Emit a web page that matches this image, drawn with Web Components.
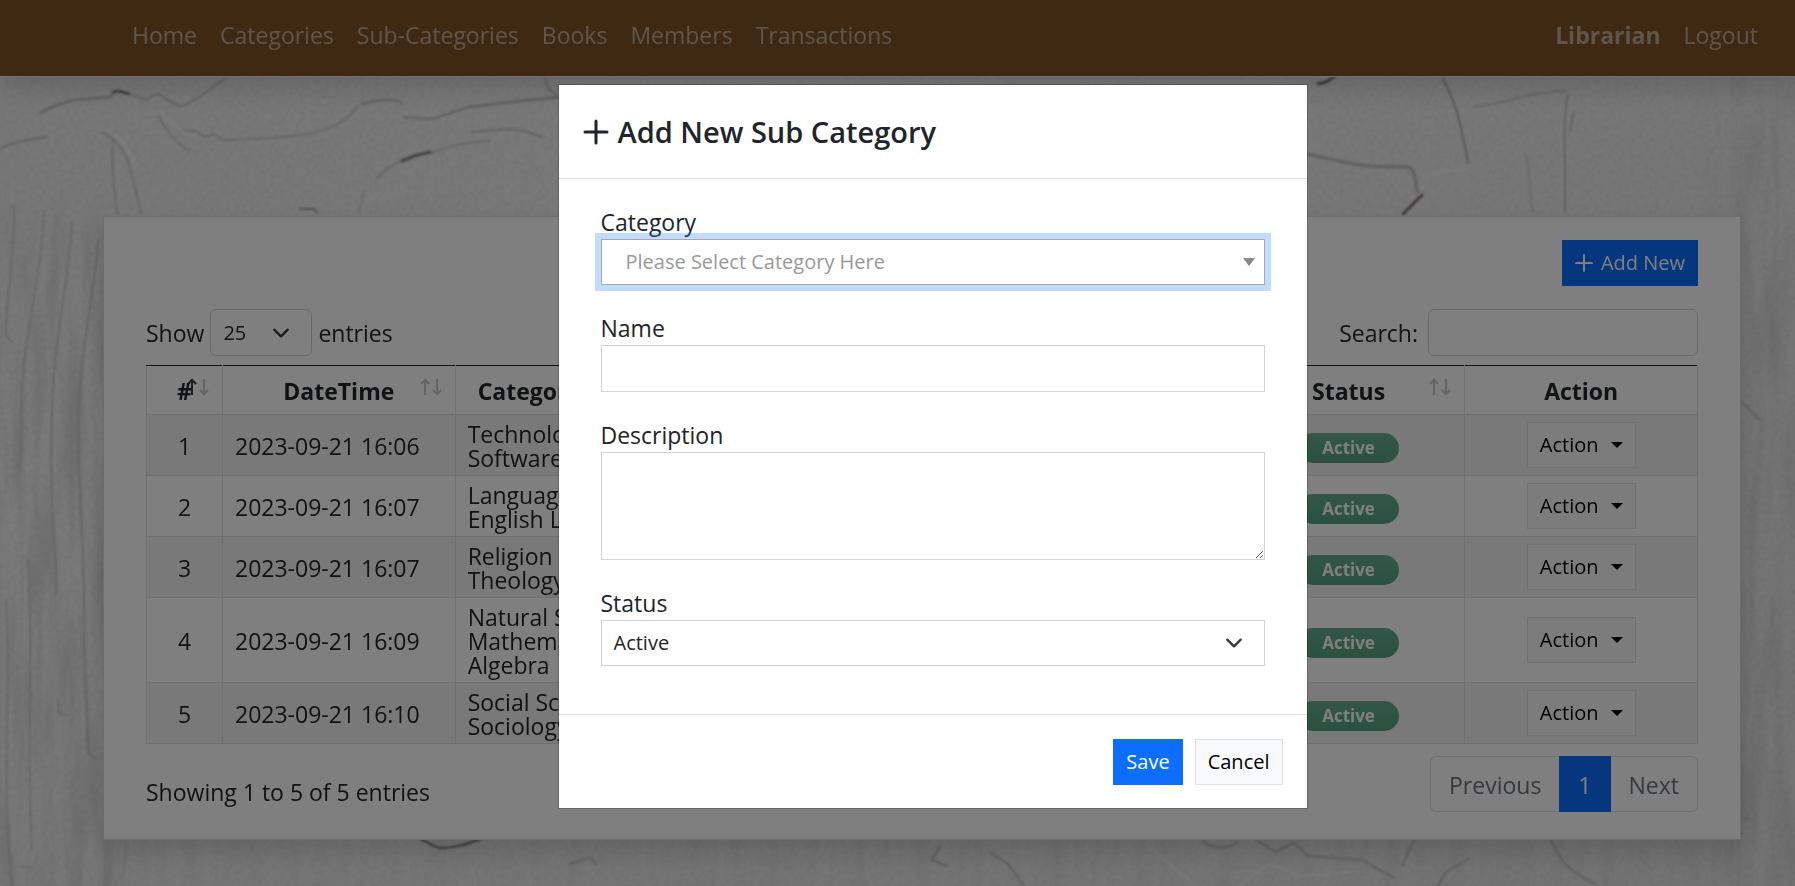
<!DOCTYPE html>
<html lang="en">
<head>
<meta charset="utf-8">
<title>Library - Sub-Categories</title>
<style>
  :root {
    --primary: #0d6efd;
    --ink: #212529;
    --line: #dee2e6;
    --size-base: 23px;
    --size-control: 20px;
  }
  html, body { margin: 0; height: 100%; }
  body {
    font-family: "Segoe UI", "Open Sans", "Noto Sans", sans-serif;
    font-size: var(--size-base);
    line-height: 36px;
    color: var(--ink);
  }
</style>
</head>
<body>
<library-page></library-page>

<template id="tpl-plaster">
  <style>
    :host { display: block; position: fixed; inset: 0; z-index: -1; background: #f0f0f0; }
    svg { display: block; width: 100%; height: 100%; }
  </style>
  <svg viewBox="0 0 1795 886" preserveAspectRatio="none" fill="none" stroke-linecap="round" stroke-linejoin="round" aria-hidden="true">
    <defs>
      <linearGradient id="tone" x1="0" y1="0" x2="1" y2="1">
        <stop offset="0" stop-color="#eceeed"/><stop offset=".3" stop-color="#f4f4f4"/>
        <stop offset=".7" stop-color="#ecebeb"/><stop offset="1" stop-color="#e8e7e7"/>
      </linearGradient>
      <linearGradient id="fade-down" x1="0" y1="0" x2="0" y2="1">
        <stop offset="0" stop-color="#000"/><stop offset=".12" stop-color="#fff"/>
      </linearGradient>
      <linearGradient id="fade-in" x1="0" y1="0" x2="1" y2="0">
        <stop offset="0" stop-color="#000"/><stop offset=".5" stop-color="#fff"/>
      </linearGradient>
      <mask id="left-mask"><rect y="190" width="130" height="696" fill="url(#fade-down)"/></mask>
      <mask id="right-mask"><rect x="1690" y="76" width="105" height="810" fill="url(#fade-in)"/></mask>
      <filter id="streaks" x="0" y="0" width="100%" height="100%">
        <feTurbulence type="fractalNoise" baseFrequency="0.06 0.008" numOctaves="3" seed="4"/>
        <feColorMatrix values="0 0 0 0 .35  0 0 0 0 .35  0 0 0 0 .35  .6 0 0 0 -.22"/>
      </filter>
      <filter id="grain" x="0" y="0" width="100%" height="100%">
        <feTurbulence type="fractalNoise" baseFrequency="0.2" numOctaves="2" seed="9"/>
        <feColorMatrix values="0 0 0 0 .3  0 0 0 0 .3  0 0 0 0 .3  .2 0 0 0 -.07"/>
      </filter>
      <filter id="soft" x="-5%" y="-5%" width="110%" height="110%"><feGaussianBlur stdDeviation="1"/></filter>
    </defs>
    <rect width="1795" height="886" fill="url(#tone)"/>
    <rect width="1795" height="886" filter="url(#grain)"/>
    <g mask="url(#left-mask)"><rect y="190" width="130" height="696" filter="url(#streaks)"/></g>
    <g mask="url(#right-mask)"><rect x="1690" y="76" width="105" height="810" filter="url(#streaks)" opacity=".8"/></g>
    <rect x="104" y="838" width="1636" height="48" filter="url(#streaks)" opacity=".4"/>
    <g filter="url(#soft)" stroke="#c0bebe" stroke-width="2" opacity=".75">
      <path d="M40 113C55 105 72 98 88 99L110 97L115 91" stroke="#a3a1a1"/>
      <path d="M128 93L146 100L158 93L166 99L180 106C196 103 210 88 226 78"/>
      <path d="M113 92L119 91L129 94" stroke="#333"/>
      <path d="M0 149C14 141 28 140 47 137" stroke="#adabab"/>
      <path d="M102 132C118 140 126 152 130 168S138 200 141 214M113 140C112 160 113 184 117 214"/>
      <path d="M158 116C168 132 176 144 190 151M180 131L196 131L205 137L214 134L222 140C250 139 285 139 312 133C340 127 350 116 358 106"/>
      <path d="M160 110C172 126 184 134 196 138M106 130C120 136 130 150 136 166" stroke="#fff"/>
      <path d="M362 104C375 100 390 97 402 103M404 117L430 119C445 117 455 110 470 107" stroke="#aaa8a8"/>
      <path d="M470 107L520 101L558 97" stroke="#a39898"/>
      <path d="M472 132L510 129L525 131L542 137M545 78L548 88L560 99" stroke="#b3b1b1"/>
      <path d="M377 178C388 167 395 163 405 159M430 153C448 148 460 142 490 141"/>
      <path d="M402 161L414 156L430 152" stroke="#6c5e5d" stroke-width="3"/>
      <path d="M365 190C362 200 360 208 359 214" stroke="#d0cece"/>
      <path d="M300 209L314 209L317 213" stroke="#8c8a8a"/>
      <path d="M1443 78C1452 96 1458 112 1461 128S1466 150 1468 163" stroke="#9d9a9a"/>
      <path d="M1306 154C1325 157 1345 164 1370 166L1408 167C1415 169 1415 178 1417 192" stroke="#b0aaaa" stroke-width="3"/>
      <path d="M1422 195L1414 203L1403 214M1318 84L1326 82L1334 77" stroke="#5c4a46" stroke-width="3"/>
      <path d="M1474 107C1500 104 1525 94 1552 92L1567 91"/>
      <path d="M1568 95C1562 120 1566 150 1565 212M1574 112L1570 131" stroke="#b5b2b2"/>
      <path d="M1526 156C1531 175 1529 195 1533 212" stroke="#c8c6c6"/>
      <path d="M1422 175C1438 171 1455 171 1468 169" stroke="#fff"/>
      <path d="M14 205C16 250 6 290 6 335L12 342M44 210C42 265 30 310 24 365S24 440 20 470" stroke="#c4c4c4"/>
      <path d="M72 222C70 270 58 320 54 372S50 500 56 570V594M98 240C94 300 78 360 78 430S86 560 84 640L88 754L96 758" stroke="#c0bebe"/>
      <path d="M28 560C34 640 26 760 32 850M6 600C12 700 0 780 12 886M58 700V712L68 716M22 867L32 868" stroke="#c6c3c3"/>
      <path d="M417 837C428 842 434 848 442 848S468 845 482 838" stroke="#503a3a"/>
      <path d="M570 864L590 858L596 864M940 846L932 860L946 866M990 852L1008 864L1024 886" stroke="#b0aaaa"/>
      <path d="M1202 838C1208 850 1226 850 1238 842M1256 840L1276 852L1294 843L1308 856L1362 860L1394 878M1415 838L1402 866M1438 886L1446 872L1470 858" stroke="#b3aaaa"/>
      <path d="M1146 844L1196 886M1238 886L1270 864L1300 876L1350 872" stroke="#f6f6f6"/>
      <path d="M1550 838C1558 856 1564 870 1596 884M1742 402L1760 420M1744 818L1750 818" stroke="#b5acac"/>
    </g>
  </svg>
</template>

<template id="tpl-navbar">
  <style>
    :host { display: block; background: #7c5426; border-bottom: 1px solid #e6e6e6; box-shadow: 0 12px 24px rgba(0,0,0,.15); }
    nav { display: flex; align-items: center; justify-content: space-between; min-height: 76px; padding: 0 37px 0 132px; box-sizing: border-box; }
    .group { display: flex; gap: 23px; padding-bottom: 6px; }
    ::slotted(a) { color: rgba(255,255,255,.5); text-decoration: none; }
    ::slotted(a[data-user]) { font-weight: 700; }
  </style>
  <nav aria-label="Main">
    <div class="group"><slot></slot></div>
    <div class="group"><slot name="account"></slot></div>
  </nav>
</template>

<template id="tpl-button">
  <style>
    :host { display: inline-block; }
    button {
      display: flex; align-items: center; gap: 8px; min-height: 46px; box-sizing: border-box; padding: 0 12px;
      font: inherit; font-size: var(--size-control); line-height: 32px;
      border: 1px solid var(--line); background: #f8f9fa; color: #000; border-radius: 0; white-space: nowrap;
    }
    :host([variant=primary]) button { background: var(--primary); border-color: var(--primary); color: #fff; }
    :host([caret]) button::after {
      content: ""; margin-left: 4px; border: 6px solid transparent; border-top-color: currentColor; border-bottom: 0;
    }
    ::slotted(svg) { width: 18px; height: 18px; flex: none; }
  </style>
  <button type="button"><slot></slot></button>
</template>

<template id="tpl-badge">
  <style>
    :host {
      display: inline-block; padding: 0 24px; border-radius: 15px; line-height: 30px;
      font-size: 17px; font-weight: 700; color: #fff; background: linear-gradient(#68ae8e, #54a27e); vertical-align: middle;
      margin-top: 6px;
    }
  </style>
  <slot></slot>
</template>

<template id="tpl-table">
  <style>
    :host { display: block; }
    table { width: 100%; border-collapse: collapse; table-layout: fixed; color: var(--ink); }
    th, td { border: 1px solid var(--line); }
    thead th { border-top-color: #212529; }
    th { position: relative; padding: 7px 12px 5px; line-height: 36px; font-weight: 700; }
    td { padding: 7px 12px 5px; line-height: 24px; }
    tbody tr:nth-child(odd) { background: rgba(0,0,0,.05); }
    .mid { text-align: center; }
    .from-left { text-align: left; padding-left: 22px; }
    th svg { position: absolute; right: 13px; top: 12px; width: 22px; height: 18px; fill: none; stroke: #212529; stroke-width: 2; }
    th svg path { opacity: .25; }
    th svg path.on { opacity: .9; }
    .c1 { width: 76px; } .c2, .c4, .c5, .c6 { width: 15%; }
    td.tight { padding-top: 0; padding-bottom: 0; }
  </style>
  <table>
    <colgroup><col class="c1"><col class="c2"><col class="c3"><col class="c4"><col class="c4"><col class="c5"><col class="c6"></colgroup>
    <thead><tr></tr></thead>
    <tbody></tbody>
  </table>
</template>

<template id="tpl-pager">
  <style>
    :host { display: block; }
    ul { display: flex; list-style: none; margin: 0; padding: 0; }
    a { display: block; padding: 10px 18px 8px; line-height: 36px; border: 1px solid var(--line); color: #6c757d; text-decoration: none; background: #fff; }
    li:first-child a { border-radius: 6px 0 0 6px; border-right: 0; }
    li:last-child a { border-radius: 0 6px 6px 0; border-left: 0; }
    a[aria-current] { background: var(--primary); border-color: var(--primary); color: #fff; }
  </style>
  <nav aria-label="Table pages"><ul>
    <li><a href="#prev">Previous</a></li>
    <li><a href="#1" aria-current="page">1</a></li>
    <li><a href="#next">Next</a></li>
  </ul></nav>
</template>

<template id="tpl-card">
  <style>
    :host { display: block; background: #fff; border: 1px solid #d8d8d8; padding: 23px 42px 27px; box-shadow: 0 12px 24px rgba(0,0,0,.15); }
    .head { display: flex; justify-content: flex-end; margin-bottom: 23px; }
    .tools, .foot { display: flex; align-items: center; justify-content: space-between; }
    .tools { margin-bottom: 9px; }
    .foot { margin-top: 12px; }
    .foot p { margin: 0; padding-top: 16px; }
    label { display: flex; align-items: center; }
    select, input {
      box-sizing: border-box; font: inherit; font-size: var(--size-control); color: var(--ink);
      border: 1px solid #ced4da; border-radius: 6px; background-color: #fff; height: 47px;
    }
    select {
      appearance: none; width: 102px; margin: 0 6px; padding: 0 12px;
      background-image: url("data:image/svg+xml,%3Csvg xmlns='http://www.w3.org/2000/svg' viewBox='0 0 16 16'%3E%3Cpath fill='none' stroke='%23343a40' stroke-linecap='round' stroke-linejoin='round' stroke-width='2' d='m2 5 6 6 6-6'/%3E%3C/svg%3E");
      background-repeat: no-repeat; background-position: right 20px center; background-size: 20px 18px;
    }
    input { width: 270px; margin-left: 10px; padding: 0 12px; }
  </style>
  <div class="head">
    <ui-button variant="primary">
      <svg viewBox="0 0 18 18" aria-hidden="true"><path d="M9 1v16M1 9h16" stroke="currentColor" stroke-width="2" stroke-linecap="round"/></svg>
      Add New
    </ui-button>
  </div>
  <div class="tools">
    <label for="length">Show
      <select id="length"><option>25</option></select>
      entries</label>
    <label for="search">Search: <input id="search" type="search"></label>
  </div>
  <slot></slot>
  <div class="foot">
    <p>Showing 1 to 5 of 5 entries</p>
    <page-links></page-links>
  </div>
</template>

<template id="tpl-field">
  <style>
    :host { display: flex; flex-direction: column; align-items: stretch; margin-bottom: 24px; }
    ::slotted(label) { line-height: 34px; padding-top: 2px; }
    ::slotted(input), ::slotted(select), ::slotted(textarea) {
      display: block; box-sizing: border-box; width: 100%; height: 47px; margin: 0; padding: 0 12px;
      font: inherit; font-size: var(--size-control); color: var(--ink);
      border: 1px solid #ced4da; border-radius: 0; background-color: #fff; outline: 0;
    }
    ::slotted(textarea) { height: 108px; }
    ::slotted(select) {
      height: 46px; appearance: none;
      background-image: url("data:image/svg+xml,%3Csvg xmlns='http://www.w3.org/2000/svg' viewBox='0 0 16 16'%3E%3Cpath fill='none' stroke='%23343a40' stroke-linecap='round' stroke-linejoin='round' stroke-width='2' d='m2 5 6 6 6-6'/%3E%3C/svg%3E");
      background-repeat: no-repeat; background-position: right 20px center; background-size: 20px 18px;
    }
    :host([picker]) ::slotted(select) {
      padding-left: 24px; color: #999; border-color: #aaa; box-shadow: 0 0 0 6px rgba(13,110,253,.25);
      background-image: url("data:image/svg+xml,%3Csvg xmlns='http://www.w3.org/2000/svg' viewBox='0 0 12 8'%3E%3Cpath fill='%23888' d='M0 0h12L6 8z'/%3E%3C/svg%3E");
      background-position: right 9px center; background-size: 12px 8px;
    }
  </style>
  <slot name="label"></slot>
  <slot></slot>
</template>

<template id="tpl-dialog">
  <style>
    :host {
      position: fixed; inset: 0; z-index: 10; display: flex; justify-content: center; align-items: flex-start;
      padding: 84px 0 24px 70px; background: rgba(0,0,0,.5); box-sizing: border-box; overflow: auto;
    }
    section { width: 750px; max-width: 100%; box-sizing: border-box; background: #fff; background-clip: padding-box; border: 1px solid rgba(0,0,0,.2); }
    header { padding: 24px; border-bottom: 1px solid var(--line); }
    h1 { display: flex; align-items: center; gap: 9px; margin: 0; font-size: 29px; line-height: 45px; font-weight: 600; }
    h1 svg { width: 26px; height: 26px; }
    .body { padding: 24px 42px; }
    footer { display: flex; justify-content: flex-end; gap: 12px; padding: 24px 24px 23px; border-top: 1px solid var(--line); }
  </style>
  <section role="dialog" aria-labelledby="dlg-title">
    <header><h1 id="dlg-title">
      <svg viewBox="0 0 26 26" aria-hidden="true"><path d="M13 2v22M2 13h22" stroke="currentColor" stroke-width="3" stroke-linecap="round"/></svg>
      <slot name="title"></slot></h1></header>
    <div class="body"><slot></slot></div>
    <footer>
      <ui-button variant="primary">Save</ui-button>
      <ui-button>Cancel</ui-button>
    </footer>
  </section>
</template>

<template id="tpl-page">
  <style>
    :host { display: block; }
    main { padding: 139px 54px 24px 103px; }
  </style>
  <plaster-backdrop></plaster-backdrop>
  <site-navbar>
    <a href="#home">Home</a>
    <a href="#categories">Categories</a>
    <a href="#sub-categories">Sub-Categories</a>
    <a href="#books">Books</a>
    <a href="#members">Members</a>
    <a href="#transactions">Transactions</a>
    <a href="#account" slot="account" data-user>Librarian</a>
    <a href="#logout" slot="account">Logout</a>
  </site-navbar>
  <main><list-card><category-table></category-table></list-card></main>
  <modal-dialog>
    <span slot="title">Add New Sub Category</span>
    <form-field picker>
      <label slot="label" for="category">Category</label>
      <select id="category"><option>Please Select Category Here</option></select>
    </form-field>
    <form-field>
      <label slot="label" for="name">Name</label>
      <input id="name" type="text">
    </form-field>
    <form-field>
      <label slot="label" for="description">Description</label>
      <textarea id="description"></textarea>
    </form-field>
    <form-field>
      <label slot="label" for="status">Status</label>
      <select id="status"><option>Active</option><option>Inactive</option></select>
    </form-field>
  </modal-dialog>
</template>

<script>
  class TemplateElement extends HTMLElement {
    constructor() {
      super();
      this.attachShadow({ mode: "open" })
        .append(document.getElementById(this.constructor.template).content.cloneNode(true));
    }
  }
  const define = (name, template) =>
    customElements.define(name, class extends TemplateElement { static template = template; });

  const sortIcon = (active) =>
    `<svg viewBox="0 0 22 18" aria-hidden="true"><path class="${active ? "on" : ""}" d="M5 17V2M1 6l4-4 4 4"/><path d="M17 1v15M13 12l4 4 4-4"/></svg>`;

  class CategoryTable extends TemplateElement {
    static template = "tpl-table";
    connectedCallback() {
      const columns = [["#", 1, 1], ["DateTime", 1], ["Category", 1], ["", 1], ["", 1], ["Status", 1], ["Action", 0]];
      const rows = [
        ["2023-09-21 16:06", ["Technology", "Software"]],
        ["2023-09-21 16:07", ["Languages", "English Lit"]],
        ["2023-09-21 16:07", ["Religion", "Theology"]],
        ["2023-09-21 16:09", ["Natural Sci", "Mathematics", "Algebra"]],
        ["2023-09-21 16:10", ["Social Sci", "Sociology"]],
      ];
      this.shadowRoot.querySelector("thead tr").innerHTML = columns.map(([text, sortable, active]) =>
        `<th scope="col" class="${text === "Category" ? "from-left" : ""}">${text}${sortable ? sortIcon(active) : ""}</th>`).join("");
      this.shadowRoot.querySelector("tbody").innerHTML = rows.map(([date, names], i) =>
        `<tr><td class="mid">${i + 1}</td><td>${date}</td><td>${names.join("<br>")}</td><td></td><td></td>` +
        `<td class="mid tight"><status-badge>Active</status-badge></td>` +
        `<td class="mid tight"><ui-button caret>Action</ui-button></td></tr>`).join("");
    }
  }

  define("plaster-backdrop", "tpl-plaster");
  define("site-navbar", "tpl-navbar");
  define("ui-button", "tpl-button");
  define("status-badge", "tpl-badge");
  customElements.define("category-table", CategoryTable);
  define("page-links", "tpl-pager");
  define("list-card", "tpl-card");
  define("form-field", "tpl-field");
  define("modal-dialog", "tpl-dialog");
  define("library-page", "tpl-page");
</script>
</body>
</html>
